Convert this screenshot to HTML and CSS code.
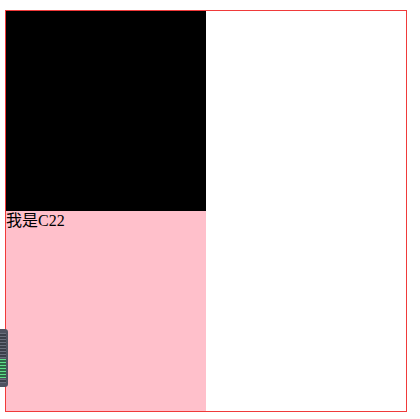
FILE: index.html
```html
<!DOCTYPE html>
<html>
<head>
<meta charset="utf-8">
<link rel="stylesheet" href="styles.css">
</head>
<body>
<div class="box">
  <div class="c11"></div>
  <div class="c22">我是C22</div>
</div>
<div class="dock">
  <div class="stripes"></div>
  <div class="meter"></div>
  <div class="stripes short"></div>
</div>
</body>
</html>
```
FILE: styles.css
```css
html, body { margin: 0; padding: 0; background: #fff; }
body { padding: 10px 0 0 5px; font-family: "Liberation Serif", "Noto Sans CJK SC", serif; }
.box {
  width: 400px;
  height: 400px;
  border: 1px solid #f03a3a;
}
.c11 { width: 200px; height: 200px; background: #000; }
.c22 {
  width: 200px;
  height: 200px;
  background: #ffc0cb;
  color: #000;
  font-size: 16px;
  line-height: 20px;
}
.dock {
  position: fixed;
  left: 0;
  top: 329px;
  width: 8px;
  height: 58px;
  background: #4f5260;
  border-radius: 0 3px 3px 0;
  display: flex;
  flex-direction: column;
  padding: 4px 0;
  box-sizing: border-box;
  gap: 1px;
}
.stripes {
  height: 26px;
  margin-right: 2px;
  background: repeating-linear-gradient(to bottom, #6a6e7c 0 1px, #3c3f4a 1px 3px);
}
.stripes.short { height: 4px; }
.meter {
  height: 20px;
  margin-right: 2px;
  background: repeating-linear-gradient(to bottom, #5fe08a 0 1px, #2f6a47 1px 3px);
}
```
